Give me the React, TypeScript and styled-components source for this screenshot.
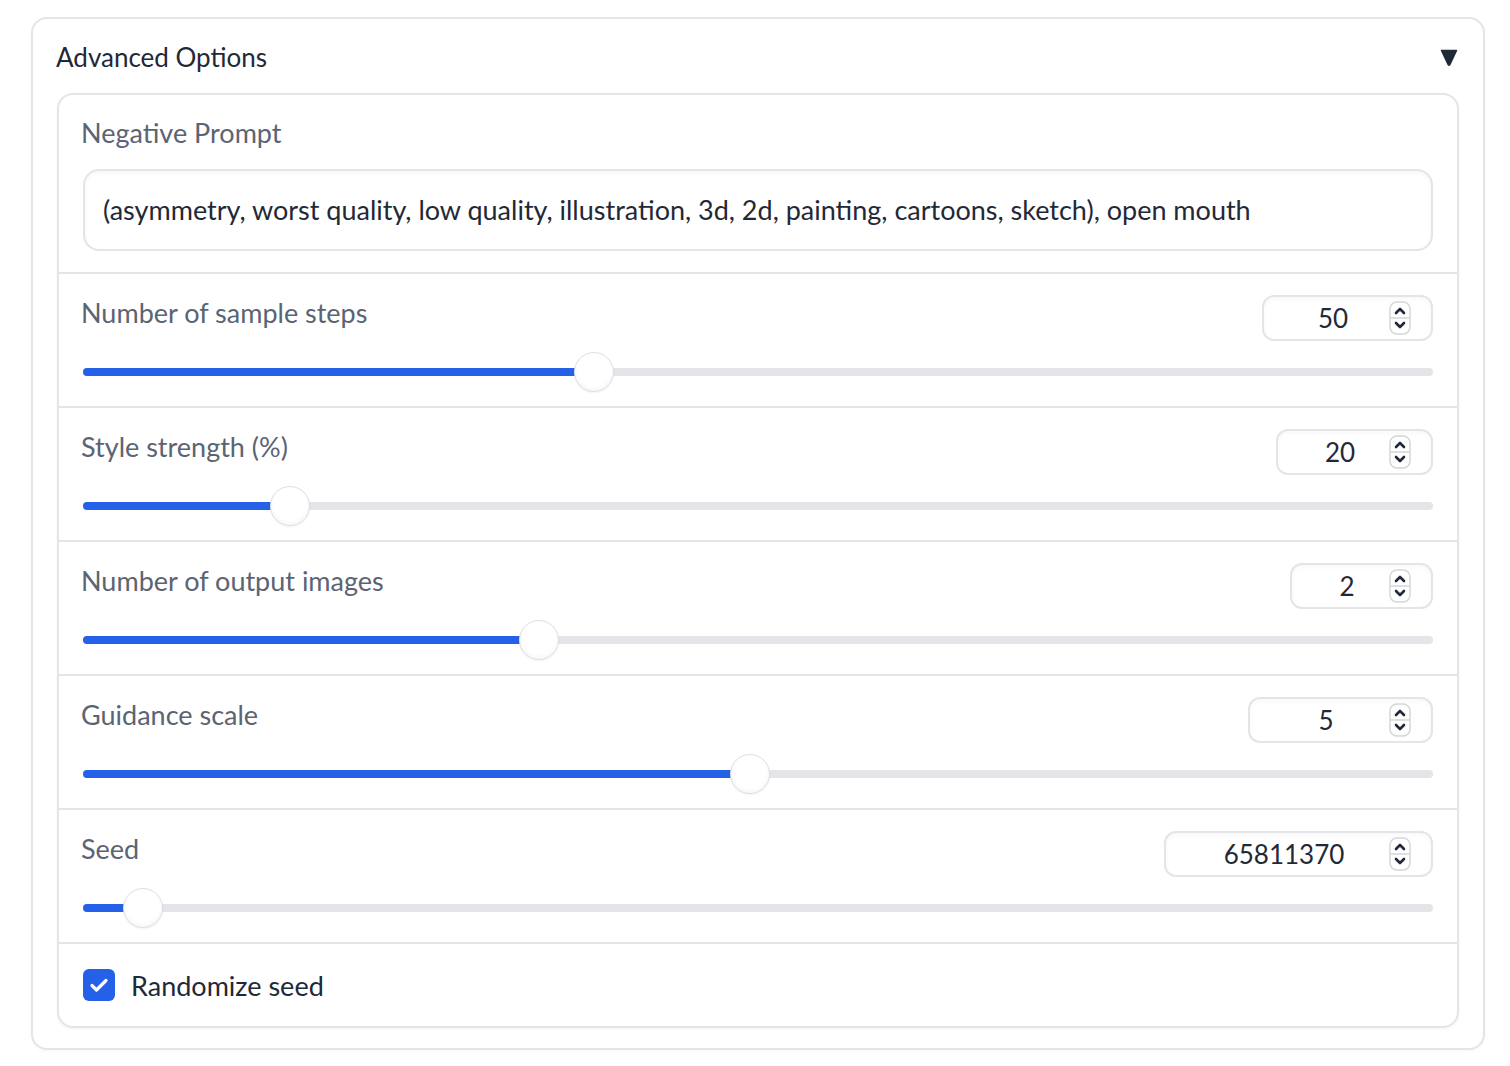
import { createGlobalStyle, styled } from "styled-components";

const GlobalStyle = createGlobalStyle`
	body {
		margin: 0;
		background: #fff;
		font-family: Lato, "Noto Sans", sans-serif;
	}
`;

type SliderData = {
	label: string;
	value: string;
	boxWidth: number;
	fraction: number;
};

const sliders: SliderData[] = [
	{ label: "Number of sample steps", value: "50", boxWidth: 171, fraction: 512 / 1352 },
	{ label: "Style strength (%)", value: "20", boxWidth: 157, fraction: 207 / 1352 },
	{ label: "Number of output images", value: "2", boxWidth: 143, fraction: 457 / 1352 },
	{ label: "Guidance scale", value: "5", boxWidth: 185, fraction: 668 / 1352 },
	{ label: "Seed", value: "65811370", boxWidth: 269, fraction: 60 / 1352 },
];

const Spinner = () => (
	<SpinBox>
		<svg width="22" height="34" viewBox="0 0 22 34">
			<rect x="1" y="1" width="20" height="32" rx="7" fill="#fff" stroke="#d4d6da" strokeWidth="1.5" />
			<line x1="1" y1="17" x2="21" y2="17" stroke="#d4d6da" strokeWidth="1.5" />
			<polyline points="7,12 11,8 15,12" fill="none" stroke="#1f2937" strokeWidth="2.6" strokeLinecap="round" strokeLinejoin="round" />
			<polyline points="7,22 11,26 15,22" fill="none" stroke="#1f2937" strokeWidth="2.6" strokeLinecap="round" strokeLinejoin="round" />
		</svg>
	</SpinBox>
);

const SliderRow = ({ label, value, boxWidth, fraction }: SliderData) => (
	<Row>
		<RowHead>
			<RowLabel>{label}</RowLabel>
			<NumberBox $width={boxWidth}>
				<NumberValue>{value}</NumberValue>
				<Spinner />
			</NumberBox>
		</RowHead>
		<SliderArea>
			<Track>
				<Fill style={{ width: `${fraction * 100}%` }} />
				<Thumb style={{ left: `${fraction * 100}%` }} />
			</Track>
		</SliderArea>
	</Row>
);

const App = () => {
	return (
		<>
			<GlobalStyle />
			<Page>
				<Accordion>
					<AccordionHead>
						<Title>Advanced Options</Title>
						<svg width="18" height="17" viewBox="0 0 18 17">
							<path d="M1.5 1.5 L16.5 1.5 L9.8 15.6 Q9 16.8 8.2 15.6 Z" fill="#1f2937" stroke="#1f2937" strokeWidth="1.5" strokeLinejoin="round" />
						</svg>
					</AccordionHead>
					<Block>
						<PromptRow>
							<Label>Negative Prompt</Label>
							<TextBox>
								(asymmetry, worst quality, low quality, illustration, 3d, 2d, painting, cartoons, sketch), open mouth
							</TextBox>
						</PromptRow>
						{sliders.map(s => (
							<SliderRow key={s.label} {...s} />
						))}
						<CheckRow>
							<CheckBox>
								<svg width="20" height="16" viewBox="0 0 20 16">
									<polyline points="3,8.5 7.5,13 17,3.5" fill="none" stroke="#fff" strokeWidth="3.2" strokeLinecap="round" strokeLinejoin="round" />
								</svg>
							</CheckBox>
							<CheckLabel>Randomize seed</CheckLabel>
						</CheckRow>
					</Block>
				</Accordion>
			</Page>
		</>
	);
};

const Page = styled.div`
	padding: 17px 0 17px 31px;
`;

const Accordion = styled.div`
	box-sizing: border-box;
	width: 1454px;
	border: 2px solid #e4e4e9;
	border-radius: 16px;
	padding: 18px 24px 20px;
	box-shadow: 0 1px 3px rgba(0, 0, 0, 0.04);
`;

const AccordionHead = styled.div`
	height: 40px;
	margin-bottom: 16px;
	display: flex;
	align-items: center;
	justify-content: space-between;
	padding-right: 1px;
`;

const Title = styled.span`
	font-size: 26px;
	color: #1f2937;
	margin-left: -1px;
`;

const Block = styled.div`
	border: 2px solid #e4e4e9;
	border-radius: 16px;
	overflow: hidden;
	box-shadow: 0 1px 3px rgba(0, 0, 0, 0.05);
`;

const PromptRow = styled.div`
	padding: 18px 24px 21px;
	border-bottom: 2px solid #e4e4e9;
	display: flex;
	flex-direction: column;
	gap: 16px;
`;

const Label = styled.span`
	font-size: 27px;
	line-height: 40px;
	color: #5b6473;
	margin-left: -2px;
`;

const RowLabel = styled(Label)`
	margin-top: -2px;
`;

const TextBox = styled.div`
	box-sizing: border-box;
	height: 82px;
	border: 2px solid #e4e4e9;
	border-radius: 16px;
	padding: 0 20px 2px 18px;
	display: flex;
	align-items: center;
	font-size: 27px;
	color: #1f2937;
	box-shadow: inset 0 2px 4px rgba(0, 0, 0, 0.04);
`;

const Row = styled.div`
	height: 134px;
	box-sizing: border-box;
	padding: 21px 24px 0;
	border-bottom: 2px solid #e4e4e9;
`;

const RowHead = styled.div`
	display: flex;
	justify-content: space-between;
	align-items: flex-start;
`;

const NumberBox = styled.div<{ $width: number }>`
	box-sizing: border-box;
	width: ${props => props.$width}px;
	height: 46px;
	border: 2px solid #e4e4e9;
	border-radius: 12px;
	display: flex;
	align-items: center;
	padding: 0 20px 0 13px;
	box-shadow: inset 0 2px 4px rgba(0, 0, 0, 0.03);
`;

const NumberValue = styled.span`
	flex: 1;
	text-align: center;
	font-size: 26px;
	color: #1f2937;
`;

const SpinBox = styled.span`
	display: flex;
	width: 22px;
	height: 34px;
`;

const SliderArea = styled.div`
	height: 40px;
	margin-top: 11px;
	display: flex;
	align-items: center;
`;

const Track = styled.div`
	position: relative;
	width: 100%;
	height: 8px;
	border-radius: 4px;
	background: #e4e4e9;
`;

const Fill = styled.div`
	height: 100%;
	border-radius: 4px 0 0 4px;
	background: #2460e8;
`;

const Thumb = styled.div`
	position: absolute;
	top: 50%;
	width: 40px;
	height: 40px;
	box-sizing: border-box;
	border-radius: 50%;
	background: #fff;
	border: 1.5px solid #dedfe3;
	box-shadow: inset 0 -2px 4px rgba(0, 0, 0, 0.04), 0 1px 2px rgba(0, 0, 0, 0.05);
	transform: translate(-50%, -50%);
`;

const CheckRow = styled.div`
	height: 82px;
	padding: 0 24px;
	display: flex;
	align-items: center;
	gap: 16px;
`;

const CheckBox = styled.span`
	width: 32px;
	height: 32px;
	border-radius: 6px;
	background: #2460e8;
	display: flex;
	align-items: center;
	justify-content: center;
`;

const CheckLabel = styled.span`
	font-size: 27px;
	color: #1f2937;
`;

export default App;
